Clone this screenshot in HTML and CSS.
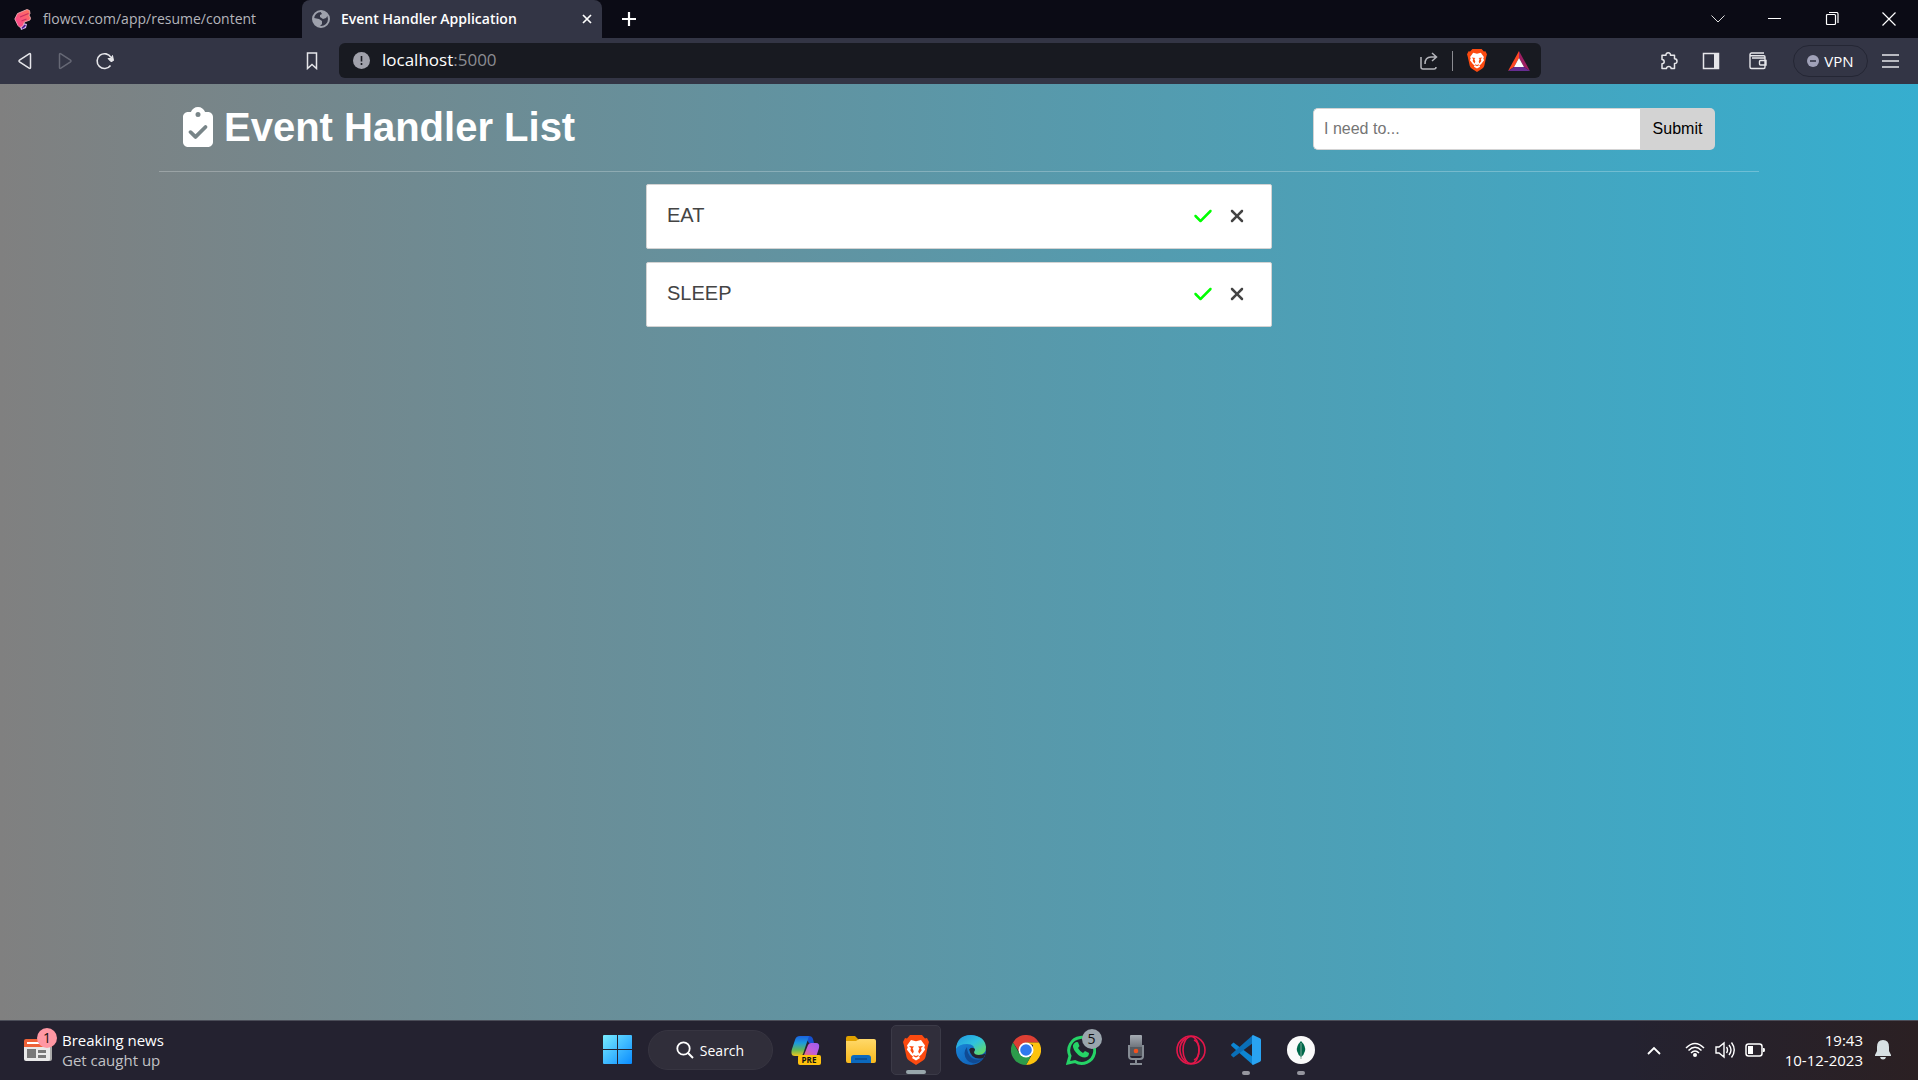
FILE: index.html
```html
<!DOCTYPE html>
<html lang="en">
<head>
<meta charset="utf-8">
<title>Event Handler Application</title>
<link rel="stylesheet" href="styles.css">
</head>
<body>
<svg class="defs" width="0" height="0" aria-hidden="true">
  <defs>
    <linearGradient id="flow" x1="0" y1="1" x2="1" y2="0"><stop offset="0" stop-color="#fb3f96"/><stop offset="1" stop-color="#ff7458"/></linearGradient>
    <linearGradient id="win" x1="0" y1="0" x2="1" y2="1"><stop offset="0" stop-color="#78ecff"/><stop offset="1" stop-color="#0a8cff"/></linearGradient>
    <linearGradient id="copilot" x1="0" y1="0" x2="0" y2="1"><stop offset="0" stop-color="#1b62e0"/><stop offset=".35" stop-color="#1b9ade"/><stop offset=".7" stop-color="#62b857"/><stop offset="1" stop-color="#f2c61c"/></linearGradient>
    <linearGradient id="copilot2" x1="1" y1="0" x2="0" y2="1"><stop offset="0" stop-color="#9b5cf0"/><stop offset=".5" stop-color="#c45fd8"/><stop offset="1" stop-color="#f8764a"/></linearGradient>
    <linearGradient id="folder" x1="0" y1="0" x2="0" y2="1"><stop offset="0" stop-color="#ffd96a"/><stop offset="1" stop-color="#f9b91c"/></linearGradient>
    <linearGradient id="edgeTop" x1="0" y1="0" x2="1" y2="1"><stop offset="0" stop-color="#2295e0"/><stop offset=".5" stop-color="#2fc2df"/><stop offset="1" stop-color="#6fe04a"/></linearGradient>
    <linearGradient id="edgeLow" x1="0" y1="0" x2="1" y2="1"><stop offset="0" stop-color="#1a8ce0"/><stop offset="1" stop-color="#0f57ac"/></linearGradient>
    <linearGradient id="mic" x1="0" y1="0" x2="0" y2="1"><stop offset="0" stop-color="#a5abb3"/><stop offset="1" stop-color="#6f757d"/></linearGradient>
    <symbol id="brave" viewBox="0 0 26 30">
      <path fill="#fb4a10" d="M7 0h12l3 3.400 2-.5 2 4-1 3.600-2.500 11.500q-.5 2-2.500 3.500L13 30l-7-4.500q-2-1.500-2.500-3.500L1 10.500 0 7l2-4 2 .4z"/>
      <path fill="#fff" d="M8 5l5 1.200L18 5l4 5.400-.8 2 1 2.200-4 5.200-2.200 1.600 1 1.600L13 25.400 9 23l1-1.600-2.200-1.600-4-5.200 1-2.200-.8-2z"/>
      <path fill="#fb4a10" d="M6 11l5 .6-1.400 1.600 1.200 3.400-1 2.200-2.400-3.200L8 13zM20 11l-5 .6 1.400 1.600-1.200 3.400 1 2.200 2.400-3.200L18 13zM10.500 20l2.500 1 2.500-1v1.200L13 22.600l-2.500-1.400z"/>
    </symbol>
    <symbol id="clipboard" viewBox="0 0 384 512">
      <path d="M192 0c-41.800 0-77.400 26.700-90.500 64H64C28.700 64 0 92.700 0 128V448c0 35.300 28.700 64 64 64H320c35.300 0 64-28.700 64-64V128c0-35.300-28.700-64-64-64H282.500C269.400 26.700 233.800 0 192 0zm0 64a32 32 0 1 1 0 64 32 32 0 1 1 0-64zM305 273L177 401c-9.400 9.400-24.600 9.400-33.900 0L79 337c-9.400-9.400-9.400-24.600 0-33.900s24.600-9.400 33.900 0l47 47L271 239c9.400-9.400 24.600-9.400 33.900 0s9.400 24.600 0 33.900z"/>
    </symbol>
    <symbol id="check" viewBox="0 0 448 512">
      <path d="M438.600 105.400c12.500 12.500 12.500 32.800 0 45.300l-256 256c-12.500 12.500-32.800 12.500-45.300 0l-128-128c-12.500-12.500-12.500-32.800 0-45.300s32.800-12.500 45.300 0L160 338.700 393.400 105.400c12.500-12.500 32.800-12.500 45.300 0z"/>
    </symbol>
    <symbol id="xmark" viewBox="0 0 384 512">
      <path d="M342.600 150.600c12.500-12.500 12.500-32.800 0-45.300s-32.800-12.500-45.300 0L192 210.700 86.600 105.400c-12.500-12.500-32.800-12.500-45.300 0s-12.500 32.800 0 45.300L146.700 256 41.400 361.400c-12.500 12.500-12.500 32.800 0 45.300s32.800 12.500 45.300 0L192 301.300 297.400 406.600c12.500 12.500 32.800 12.500 45.300 0s12.500-32.800 0-45.300L237.300 256 342.600 150.600z"/>
    </symbol>
  </defs>
</svg>

<header class="chrome">
  <div class="tabs">
    <div class="tab">
      <svg width="18" height="22" viewBox="0 0 18 22"><path fill="#d9b8ef" d="M5 14l8 2-1 4-5 2z"/><path fill="#4b1b8f" d="M7 16l5 1-1 2-3 2z"/><path fill="url(#flow)" stroke="#f7b9bd" stroke-width=".8" d="M3.500 5.500L13 1.500l2.500 1 .5 3-1 1.500 1.500 3-.5 2-5.500 2L9 18l-3 1.500-2-2L.8 11z"/><path d="M6 9l8.500-3.500M7.500 13l5-2" stroke="#c92f62" stroke-width="1.200"/></svg>
      <span class="tab-title">flowcv.com/app/resume/content</span>
    </div>
    <div class="tab active">
      <svg width="18" height="18" viewBox="0 0 18 18"><circle cx="9" cy="9" r="8" fill="none" stroke="#9ea1ac" stroke-width="2"/><path fill="#9ea1ac" d="M8 1q5-1 8 4l-2 3-3 1-3-2V5l2-1zM2 8l5 1 3 2v3l-3 3Q2 15 1 9z"/></svg>
      <span class="tab-title">Event Handler Application</span>
      <button class="icon-btn" aria-label="Close tab"><svg width="10" height="10" viewBox="0 0 10 10"><path d="M1 1l8 8M9 1L1 9" stroke="#fff" stroke-width="1.700"/></svg></button>
    </div>
    <button class="icon-btn new-tab" aria-label="New tab"><svg width="16" height="16" viewBox="0 0 16 16"><path d="M8 1v14M1 8h14" stroke="#fff" stroke-width="2.200"/></svg></button>
    <div class="window-buttons">
      <button class="icon-btn" aria-label="Search tabs"><svg width="14" height="8" viewBox="0 0 14 8"><path d="M.5.5L7 7 13.500.5" fill="none" stroke="#ddd"/></svg></button>
      <button class="icon-btn" aria-label="Minimize"><svg width="14" height="14" viewBox="0 0 14 14"><path d="M0 6.500h13" stroke="#fff"/></svg></button>
      <button class="icon-btn" aria-label="Restore"><svg width="14" height="14" viewBox="0 0 14 14"><path d="M2.500 2.500h7q1 0 1 1v8q0 1-1 1h-7q-1 0-1-1v-8q0-1 1-1zM4 .5h7.500q1.500 0 1.500 1.500V11" fill="none" stroke="#fff" stroke-width="1.200"/></svg></button>
      <button class="icon-btn" aria-label="Close"><svg width="14" height="14" viewBox="0 0 14 14"><path d="M.5.5l13 13M13.500.5l-13 13" stroke="#fff" stroke-width="1.200"/></svg></button>
    </div>
  </div>
  <div class="toolbar">
    <div class="nav-buttons">
      <button class="icon-btn" aria-label="Back"><svg width="14" height="18" viewBox="0 0 14 18"><path d="M12.500 2.500v13q0 1.400-1.400.6L1.500 9.800q-1-.8 0-1.600l9.600-6.300q1.400-.8 1.400.6z" fill="none" stroke="#e6e6ea" stroke-width="1.500"/></svg></button>
      <button class="icon-btn" aria-label="Forward"><svg width="14" height="18" viewBox="0 0 14 18"><path d="M1.500 2.500v13q0 1.400 1.400.6l9.600-6.300q1-.8 0-1.600L2.900 1.900q-1.400-.8-1.400.6z" fill="none" stroke="#666875" stroke-width="1.500"/></svg></button>
      <button class="icon-btn" aria-label="Reload"><svg width="18" height="18" viewBox="0 0 18 18"><path d="M14.500 13.500A7.400 7.400 0 1 1 15 5.500" fill="none" stroke="#e6e6ea" stroke-width="1.600"/><path d="M12 6.500h3l1.500-3 1 5-2.500 1.200z" fill="#e6e6ea" stroke="#e6e6ea"/></svg></button>
    </div>
    <button class="icon-btn bookmark" aria-label="Bookmark"><svg width="14" height="18" viewBox="0 0 14 18"><path d="M2.500 1h9v15.500L7 12.500l-4.500 4z" fill="none" stroke="#e6e6ea" stroke-width="1.500"/></svg></button>
    <div class="address">
      <svg width="17" height="17" viewBox="0 0 17 17"><circle cx="8.500" cy="8.500" r="8.500" fill="#a0a1ab"/><path d="M8.500 4v5.500M8.500 11v2" stroke="#181a21" stroke-width="1.600"/></svg>
      <span class="url">localhost<span class="port">:5000</span></span>
      <button class="icon-btn" aria-label="Share"><svg width="18" height="18" viewBox="0 0 18 18"><path d="M1 5v10q0 2 2 2h11q2 0 2-2M5 12Q5 5 11 5h5M12 1l4.500 4L12 9" fill="none" stroke="#b4b5bb" stroke-width="1.500"/></svg></button>
      <span class="divider"></span>
      <button class="icon-btn shield" aria-label="Brave Shields"><svg width="20" height="23"><use href="#brave"/></svg></button>
      <button class="icon-btn" aria-label="Brave Rewards"><svg width="22" height="20" viewBox="0 0 22 20"><path fill="#ff4724" d="M11 0L0 20l6-4 5-9z"/><path fill="#9e1f63" d="M11 0l11 20-6-4-5-9z"/><path fill="#662d91" d="M0 20h22l-6-4H6z"/><path fill="#fff" d="M11 7l5 9H6z"/></svg></button>
    </div>
    <div class="extensions">
      <button class="icon-btn" aria-label="Extensions"><svg width="18" height="18" viewBox="0 0 18 18"><path d="M2 3.200h4q-.2-2.400 2.200-2.400t2.300 2.400h4v3.600q2.500 0 2.500 2.400t-2.500 2.400v5h-3.300q-.3-2-2.400-2t-2.400 2H2v-4.800q2.200 0 2.200-2T2 7.600z" fill="none" stroke="#e6e6ea" stroke-width="1.500" stroke-linejoin="round"/></svg></button>
      <button class="icon-btn sidebar" aria-label="Sidebar"><svg width="18" height="18" viewBox="0 0 18 18"><path d="M1.500 1.500h15v15h-15z" fill="none" stroke="#e6e6ea" stroke-width="1.500"/><path d="M12 1h5v16h-5z" fill="#e6e6ea"/></svg></button>
      <button class="icon-btn wallet" aria-label="Wallet"><svg width="18" height="18" viewBox="0 0 18 18"><path d="M16 6V5q0-1.200-1.200-1.200H2.500Q1 3.800 1 2.500T2.500 1H15M1 2.500V15q0 1.500 1.500 1.500h12.300q1.200 0 1.200-1.500V6H3M17 8.500h-5.500q-1 0-1 1v2.500q0 1 1 1H17z" fill="none" stroke="#e6e6ea" stroke-width="1.400"/></svg></button>
      <button class="vpn"><svg width="12" height="12" viewBox="0 0 12 12"><circle cx="6" cy="6" r="6" fill="#a0a1b8"/><path d="M3 6h6" stroke="#333545" stroke-width="1.600"/></svg>VPN</button>
      <button class="icon-btn" aria-label="Menu"><svg width="17" height="14" viewBox="0 0 17 14"><path d="M0 1h17M0 7h17M0 13h17" stroke="#e6e6ea" stroke-width="1.600"/></svg></button>
    </div>
  </div>
</header>

<main class="page">
  <section class="masthead">
    <h1><svg width="32" height="40"><use href="#clipboard"/></svg>Event Handler List</h1>
    <form class="add-form">
      <input type="text" placeholder="I need to..." aria-label="New item">
      <button type="submit">Submit</button>
    </form>
  </section>
  <ul class="items">
    <li><span>EAT</span><button class="icon-btn done" aria-label="Complete EAT"><svg width="20" height="20"><use href="#check"/></svg></button><button class="icon-btn remove" aria-label="Remove EAT"><svg width="20" height="20"><use href="#xmark"/></svg></button></li>
    <li><span>SLEEP</span><button class="icon-btn done" aria-label="Complete SLEEP"><svg width="20" height="20"><use href="#check"/></svg></button><button class="icon-btn remove" aria-label="Remove SLEEP"><svg width="20" height="20"><use href="#xmark"/></svg></button></li>
  </ul>
</main>

<footer class="taskbar">
  <button class="news">
    <span class="app-icon">
      <svg width="28" height="22" viewBox="0 0 28 22"><path fill="#aaa" d="M22 5h4q2 0 2 2v13q0 2-2 2h-4z"/><path fill="#e9e9e9" d="M0 3h26v17q0 2-2 2H2q-2 0-2-2z"/><path fill="#ee6238" d="M0 8V2q0-2 2-2h26v8z"/><path fill="#fff" d="M3 3h12v2H3z"/><path fill="#777" d="M3 10h9v9H3zM14 11h8v3h-8zM14 16h8v3h-8z"/></svg>
      <span class="badge news-badge">1</span>
    </span>
    <span class="news-text"><span>Breaking news</span><span class="muted">Get caught up</span></span>
  </button>
  <nav class="apps">
    <button class="app" aria-label="Start"><svg width="30" height="30" viewBox="0 0 30 30"><path fill="url(#win)" d="M1 0h13v14H0V1q0-1 1-1zM15 0h13q1 0 1 1v13H15zM0 15h14v14H1q-1 0-1-1zM15 15h14v13q0 1-1 1H15z"/></svg></button>
    <button class="search"><svg width="18" height="18" viewBox="0 0 18 18"><circle cx="7.500" cy="7.500" r="6.200" fill="none" stroke="#fff" stroke-width="1.800"/><path d="M12 12l5 5" stroke="#fff" stroke-width="2"/></svg>Search</button>
    <button class="app" aria-label="Copilot"><span class="app-icon"><svg width="30" height="30" viewBox="0 0 30 30"><path fill="#1650d0" d="M13 1h5q3 0 4 3l1 4h-5z"/><path fill="url(#copilot)" d="M9 1h9l-6 18q-1 2-3 2H4q-5 0-3-7L4 5q1-4 5-4z"/><path fill="url(#copilot2)" d="M20 8h5q4 0 3 5l-3 9H10q2 0 3-2l4-10q1-2 3-2z"/></svg><span class="pre">PRE</span></span></button>
    <button class="app" aria-label="File Explorer"><svg width="30" height="28" viewBox="0 0 30 28"><path fill="#e0a100" d="M0 2q0-2 2-2h7l4 4h15q2 0 2 2v4H0z"/><path fill="url(#folder)" d="M0 5h10l3-2h15q2 0 2 2v20q0 2-2 2H2q-2 0-2-2z"/><path fill="#0c69bd" d="M5 27v-5q0-3 3-3h14q3 0 3 3v5z"/><path d="M9 23h12" stroke="#0a4a8c" stroke-width="1.500"/></svg></button>
    <button class="app current running" aria-label="Brave"><svg width="26" height="30"><use href="#brave"/></svg></button>
    <button class="app" aria-label="Edge"><svg width="30" height="30" viewBox="0 0 30 30"><circle cx="15" cy="15" r="15" fill="url(#edgeLow)"/><path fill="url(#edgeTop)" d="M0 14Q1 0 15 0q14 1 15 12 0 8-8 8-6 0-4-3 2-8-7-8-8 0-11 5z"/><path fill="#104b94" d="M11 12q-5 6 0 13 6 7 16-1-7 2-11-1-5-4-5-11z"/><path fill="#242230" d="M13 15q2-4 6-1 0 2-1 3 0 3 5 3 4 0 6-1.500v1.500l-1.500 3q-12 3-14.500-9z"/></svg></button>
    <button class="app" aria-label="Chrome"><svg width="30" height="30" viewBox="0 0 30 30"><path fill="#dc3f34" d="M2 7.500A15 15 0 0 1 28 7.500H15L9 18z"/><path fill="#fdc30e" d="M28 7.500A15 15 0 0 1 15 30l6.500-11.500L22 10l-7-2.500z"/><path fill="#2c9c4b" d="M2 7.500L8.500 18.700 15 22h4.500L15 30A15 15 0 0 1 2 7.500z"/><circle cx="15" cy="15" r="7.500" fill="#fff"/><circle cx="15" cy="15" r="5.800" fill="#2f79ee"/></svg></button>
    <button class="app" aria-label="WhatsApp"><span class="app-icon"><svg width="30" height="30" viewBox="0 0 30 30"><path d="M2 28l2-7A13 13 0 1 1 9 26.500z" fill="none" stroke="#25d366" stroke-width="3"/><path fill="#25d366" d="M10 7l2 .3 1.500 3.700-1.500 2q2 3.500 5 5l2-2 4 2q0 4-4 4.500-5 0-9-5-5-6-2-9z"/></svg><span class="badge chat-badge">5</span></span></button>
    <button class="app" aria-label="Voice Recorder"><svg width="16" height="30" viewBox="0 0 16 30"><path fill="url(#mic)" d="M2 1q0-1 1-1h10q1 0 1 1v11H2z"/><path fill="#555a61" d="M2 12h12v9H2z"/><path d="M1 10v11q0 3 3 3h8q3 0 3-3V10M8 24v5M2 29h12" fill="none" stroke="#868c94" stroke-width="2"/><circle cx="8" cy="16" r="2.300" fill="#f4511e"/></svg></button>
    <button class="app" aria-label="Opera GX"><svg width="30" height="30" viewBox="0 0 30 30"><g fill="none" stroke="#e3174a" stroke-width="1.600"><circle cx="15" cy="15" r="14"/><ellipse cx="15" cy="15" rx="8" ry="13.500"/><path d="M18 5q5 2 5 10t-5 10"/><path d="M10 3Q3 8 4 16q1 7 6 11"/></g></svg></button>
    <button class="app running" aria-label="Visual Studio Code"><svg width="30" height="30" viewBox="0 0 30 30"><path fill="#0d86d3" d="M2.500 7.500L22 22v8L.5 11q-.8-1 0-1.800z"/><path fill="#0a6fb8" d="M2.500 22.500L22 8V0L.5 19q-.8 1 0 1.800z"/><path fill="#29a3f2" d="M22 0l7 3.200q1 .6 1 1.800v20q0 1.200-1 1.800L22 30l-1-1V1z"/></svg></button>
    <button class="app running" aria-label="MongoDB Compass"><svg width="30" height="30" viewBox="0 0 30 30"><circle cx="15" cy="15" r="14" fill="#fafafa"/><path fill="#00684a" d="M15 6q5 5 4 10-1 4-4 6-3-2-4-6-1-5 4-10z"/><path d="M15 8v16" stroke="#7fa898"/></svg></button>
  </nav>
  <div class="tray">
    <button class="icon-btn" aria-label="Show hidden icons"><svg width="14" height="9" viewBox="0 0 14 9"><path d="M1 8l6-6 6 6" fill="none" stroke="#fff" stroke-width="1.800"/></svg></button>
    <button class="icon-btn status" aria-label="Network, sound and battery">
      <svg width="20" height="16" viewBox="0 0 20 16"><path d="M1 6q9-9 18 0M3.500 8.500q6.500-6.500 13 0M6 11q4-4 8 0" fill="none" stroke="#fff" stroke-width="1.500"/><circle cx="10" cy="13" r="2" fill="#fff"/></svg>
      <svg width="20" height="18" viewBox="0 0 20 18"><path d="M1 6h3l5-4v14l-5-4H1zM11.500 6q2 3 0 6M14 4q4 5 0 10M16.500 1.500q5.500 7.500 0 15" fill="none" stroke="#fff" stroke-width="1.400"/></svg>
      <svg width="20" height="14" viewBox="0 0 20 14"><rect x="1" y="1" width="16" height="12" rx="2.500" fill="none" stroke="#fff" stroke-width="1.500"/><path fill="#fff" d="M3 3h5v8H3zM18 5h1q1 0 1 2t-1 2h-1z"/></svg>
    </button>
    <div class="clock"><span>19:43</span><span>10-12-2023</span></div>
    <button class="icon-btn" aria-label="Notifications"><svg width="16" height="20" viewBox="0 0 16 20"><path fill="#d7e0e3" d="M8 0q6 0 6 7v4l2 4v1H0v-1l2-4V7q0-7 6-7zM5 17h6q-.5 2.500-3 2.500T5 17z"/></svg></button>
  </div>
</footer>
</body>
</html>
```
FILE: styles.css
```css
* { box-sizing: border-box; }

body {
  margin: 0;
  min-height: 100vh;
  display: flex;
  flex-direction: column;
  font-family: "Open Sans", "Noto Sans", sans-serif;
  font-size: 14px;
  color: #fff;
}

button, input { font: inherit; color: inherit; }
button { border: 0; padding: 0; background: none; }
svg { display: block; flex: none; }
.defs { position: absolute; }
.icon-btn { display: flex; align-items: center; justify-content: center; flex: none; }

/* Browser frame */
.tabs { display: flex; height: 38px; background: #0b0b15; }
.tab {
  display: flex;
  align-items: center;
  gap: 11px;
  width: 302px;
  padding: 0 14px;
  color: #b4b5bb;
}
.tab.active {
  width: 300px;
  padding: 0 10px;
  border-radius: 8px 8px 0 0;
  background: #333545;
  color: #fff;
  font-weight: 600;
}
.tab-title { flex: 1; padding-bottom: 2px; white-space: nowrap; }
.new-tab { width: 54px; }
.window-buttons { display: flex; margin-left: auto; padding-right: 1px; }
.window-buttons .icon-btn { width: 57px; }

.toolbar {
  display: flex;
  align-items: center;
  height: 46px;
  padding-bottom: 1px;
  background: #333545;
}
.nav-buttons { display: flex; padding-left: 5px; }
.nav-buttons .icon-btn { width: 40px; }
.bookmark { margin-left: auto; width: 54px; }
.address {
  display: flex;
  align-items: center;
  gap: 12px;
  width: 1202px;
  height: 35px;
  padding: 0 11px 0 14px;
  border-radius: 6px;
  background: #181a21;
  font-size: 17px;
}
.url { flex: 1; padding-bottom: 2px; }
.port { color: #8b8c92; }
.divider { width: 1px; height: 20px; margin: 0 2px; background: #8b8c92; }
.shield { margin-right: 9px; }
.extensions {
  display: flex;
  align-items: center;
  justify-content: flex-end;
  gap: 14px;
  width: 377px;
  padding-right: 19px;
}
.sidebar { margin-left: 10px; }
.wallet { margin-left: 15px; }
.vpn {
  display: flex;
  align-items: center;
  justify-content: center;
  gap: 5px;
  width: 75px;
  height: 32px;
  margin-left: 12px;
  border: 1px solid #242634;
  border-radius: 16px;
  font-size: 15px;
}

/* Page */
.page {
  flex: 1;
  background: linear-gradient(to right, #808080, #36aecf);
  font-family: "Liberation Sans", Arial, sans-serif;
}
.masthead {
  display: flex;
  align-items: center;
  justify-content: space-between;
  max-width: 1600px;
  height: 88px;
  margin: 0 auto;
  padding: 0 44px 0 23px;
  border-bottom: 1px solid rgba(255, 255, 255, .25);
}
h1 {
  display: flex;
  align-items: center;
  gap: 10px;
  margin: 0;
  padding-bottom: 2px;
  font-size: 40px;
  line-height: 48px;
  fill: #fff;
}
.add-form { display: flex; width: 402px; padding-top: 2px; font-size: 16px; }
.add-form input {
  flex: 1;
  min-width: 0;
  height: 42px;
  padding: 0 10px;
  border: 1px solid #d3d3d3;
  border-right: 0;
  border-radius: 5px 0 0 5px;
  background: #fff;
  color: #222;
}
.add-form input::placeholder { color: #757575; }
.add-form button {
  width: 75px;
  border-radius: 0 5px 5px 0;
  background: #d3d3d3;
  color: #000;
}
.items {
  display: flex;
  flex-direction: column;
  gap: 13px;
  max-width: 626px;
  margin: 12px auto;
  padding: 0;
  list-style: none;
}
.items li {
  display: flex;
  align-items: center;
  gap: 14px;
  height: 65px;
  padding: 0 24px 2px 20px;
  border: 1px solid #d3d3d3;
  border-radius: 2px;
  background: #fff;
  color: #444;
  font-size: 20px;
}
.items span { flex: 1; }
.done { fill: #0f0; }
.remove { fill: #444; }

/* Taskbar */
.taskbar {
  display: grid;
  grid-template-columns: 1fr auto 1fr;
  align-items: center;
  height: 60px;
  padding-bottom: 1px;
  border-top: 1px solid #4b4d58;
  background: linear-gradient(to right, #242230 85%, #2b2023);
}
.news { display: flex; align-items: center; gap: 10px; padding-left: 24px; text-align: left; }
.news-text, .clock { display: flex; flex-direction: column; font-size: 15px; line-height: 20px; }
.muted { color: #c2c2c6; }
.app-icon { position: relative; }
.badge {
  position: absolute;
  width: 20px;
  height: 20px;
  border-radius: 10px;
  color: #111;
  line-height: 20px;
  text-align: center;
}
.news-badge { top: -11px; right: -5px; background: #ff98a4; }
.chat-badge { top: -6px; right: -6px; background: #9aa5ad; }
.apps { display: flex; align-items: center; gap: 5px; }
.app {
  position: relative;
  display: flex;
  align-items: center;
  justify-content: center;
  width: 50px;
  height: 50px;
  border-radius: 5px;
}
.current { border: 1px solid #3b3a47; background: #302e3b; }
.running::after {
  content: "";
  position: absolute;
  bottom: 0;
  left: 50%;
  width: 8px;
  height: 4px;
  margin-left: -4px;
  border-radius: 2px;
  background: #96969f;
}
.current::after { width: 20px; margin-left: -10px; background: #98a6ab; }
.search {
  display: flex;
  align-items: center;
  justify-content: center;
  gap: 6px;
  width: 125px;
  height: 40px;
  margin-right: 3px;
  border: 1px solid #373541;
  border-radius: 20px;
  background: #302e3a;
}
.pre {
  position: absolute;
  right: 0;
  bottom: 0;
  width: 23px;
  border-radius: 2px;
  background: #ffc20e;
  color: #111;
  font-size: 8px;
  font-weight: 700;
  line-height: 10px;
}
.tray { display: flex; align-items: center; justify-content: flex-end; padding-right: 27px; }
.status { gap: 10px; margin: 0 20px 0 24px; }
.clock { margin-right: 12px; text-align: right; }
```
